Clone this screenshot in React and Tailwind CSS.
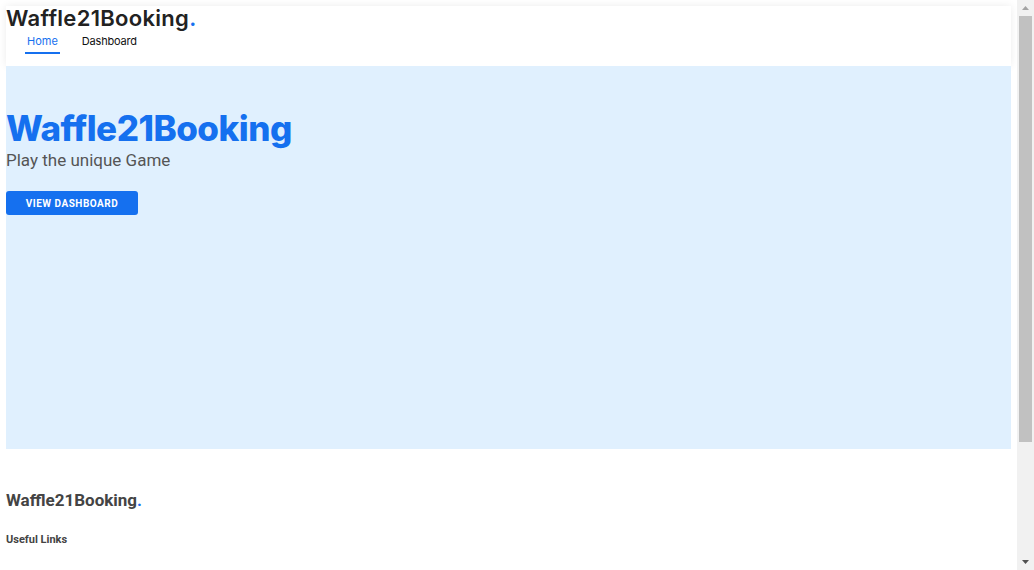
export default function App() {
  return (
    <div className="flex h-screen overflow-hidden bg-white font-['Roboto',sans-serif]">
      <div className="flex-1 min-h-[720px] px-[6px] pt-[6px]">
        {/* Header */}
        <header className="h-[60px] bg-white shadow-[0_0_8px_rgba(0,0,0,0.08)]">
          <div className="font-['Inter',sans-serif] text-[22px] font-semibold leading-[22px] tracking-[0.3px] text-[#222] pt-[1px]">
            Waffle21Booking<span className="text-[#1570ef]">.</span>
          </div>
          <nav className="flex gap-[22px] pl-[19px] mt-[5px] font-['Inter',sans-serif] text-[11px] leading-[14px]">
            <a className="px-[2px] pb-[4px] border-b-2 border-[#1570ef] text-[#1570ef]">Home</a>
            <a className="pb-[4px] text-[#111] tracking-[-0.2px]">Dashboard</a>
          </nav>
        </header>

        {/* Hero */}
        <section className="h-[383px] bg-[#e0f0fe] pt-[40px]">
          <h1 className="font-['Inter',sans-serif] text-[35px] font-extrabold leading-[44px] text-[#1570ef] tracking-[-0.5px]">
            Waffle21Booking
          </h1>
          <p className="text-[17px] leading-[21px] text-[#555]">Play the unique Game</p>
          <button className="mt-[20px] h-[24px] w-[132px] rounded-[3px] bg-[#1570ef] text-[10px] font-bold uppercase tracking-[0.5px] text-white">
            View Dashboard
          </button>
        </section>

        {/* Footer */}
        <footer className="pt-[41px]">
          <h3 className="text-[17px] font-bold leading-[20px] text-[#444]">
            Waffle21Booking<span className="text-[#1570ef]">.</span>
          </h3>
          <h4 className="mt-[22px] text-[11px] font-bold text-[#444]">Useful Links</h4>
        </footer>
      </div>

      {/* Scrollbar */}
      <div className="flex w-[17px] shrink-0 flex-col items-center bg-[#f1f1f1]">
        <svg width="17" height="16" viewBox="0 0 17 16" className="shrink-0">
          <path d="M5 10 L8.5 6 L12 10 Z" fill="#a3a3a3" />
        </svg>
        <div className="h-[426px] w-[13px] bg-[#c1c1c1]" />
        <div className="flex-1" />
        <svg width="17" height="16" viewBox="0 0 17 16" className="shrink-0">
          <path d="M5 6 L12 6 L8.5 10 Z" fill="#505050" />
        </svg>
      </div>
    </div>
  );
}
